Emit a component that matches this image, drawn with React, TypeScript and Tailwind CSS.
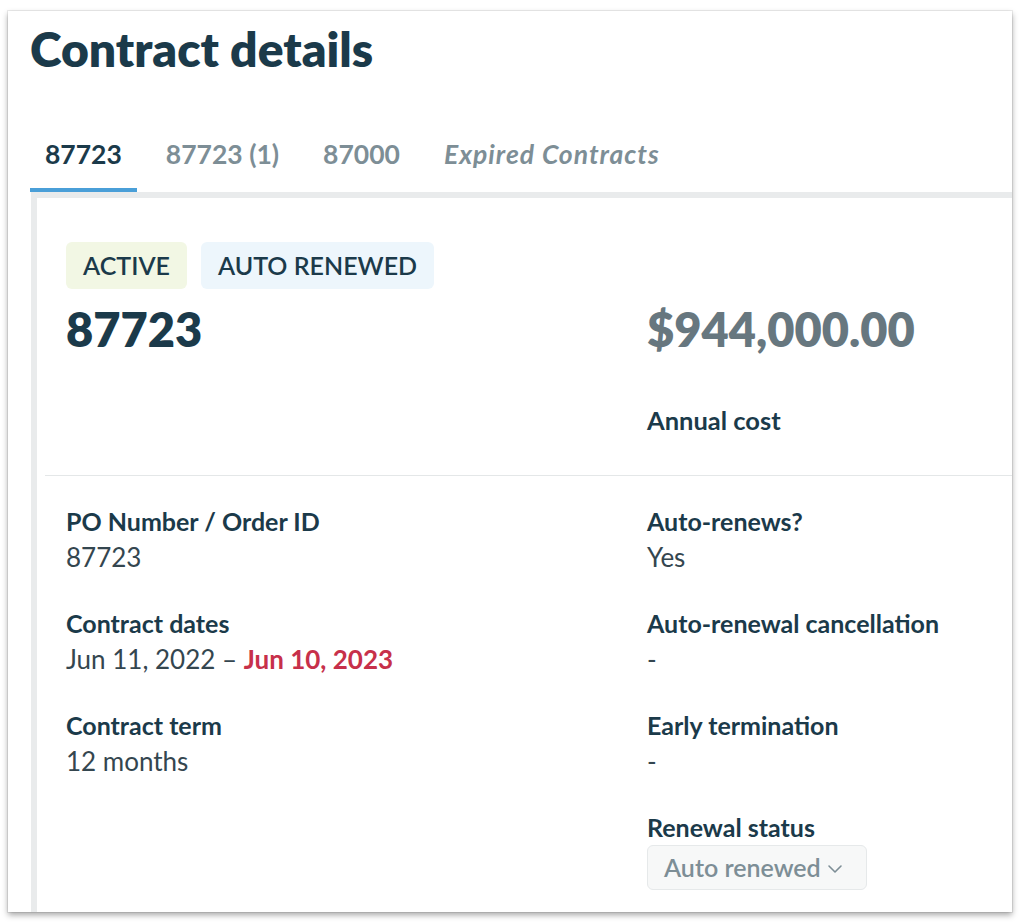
import { ChevronDown } from "lucide-react";

const LEFT_FIELDS = [
  { label: "PO Number / Order ID", value: "87723" },
  { label: "Contract dates", value: "dates" },
  { label: "Contract term", value: "12 months" },
];

const RIGHT_FIELDS = [
  { label: "Auto-renews?", value: "Yes" },
  { label: "Auto-renewal cancellation", value: "-" },
  { label: "Early termination", value: "-" },
];

const TABS = [
  { label: "87723", active: true },
  { label: "87723 (1)", active: false },
  { label: "87000", active: false },
  { label: "Expired Contracts", active: false, italic: true },
];

function Field({ label, children }: { label: string; children: React.ReactNode }) {
  return (
    <div className="mb-[30px]">
      <div className="text-[25px] leading-[36px] font-bold text-[#1b3a4a]">{label}</div>
      <div className="text-[26px] leading-[36px] text-[#34464f]">{children}</div>
    </div>
  );
}

export default function App() {
  return (
    <div className="min-h-screen bg-white pt-[11px] pl-[8px] font-['Lato',sans-serif]">
      <div className="w-[1004px] h-[901px] bg-white overflow-hidden flex flex-col pl-[22px] shadow-[0_3px_6px_rgba(0,0,0,0.35),0_0_0_1px_rgba(0,0,0,0.07)]">
        {/* Header */}
        <h1 className="pt-[14px] text-[48px] leading-[48px] font-extrabold text-[#1b3a4a]">
          Contract details
        </h1>

        {/* Tabs */}
        <div className="mt-[65px] flex gap-[14px]">
          {TABS.map((tab) => (
            <div
              key={tab.label}
              className={`px-[15px] pb-[18px] text-[26.5px] leading-[32px] font-bold border-b-4 ${
                tab.active ? "border-[#4a9fd8] text-[#1b3a4a]" : "border-transparent text-[#7d8e96]"
              } ${tab.italic ? "italic tracking-[1px]" : ""}`}
            >
              {tab.label}
            </div>
          ))}
        </div>

        {/* Panel */}
        <div className="flex-1 ml-[1px] border-l-[6px] border-t-[6px] border-[#e9ebec] bg-white">
          <div className="px-[29px] pt-[44px]">
            <div className="flex gap-[14px]">
              <span className="h-[47px] px-[17px] flex items-center rounded-[6px] bg-[#f2f7e4] text-[25px] font-semibold text-[#1b3a4a]">
                ACTIVE
              </span>
              <span className="h-[47px] px-[17px] flex items-center rounded-[6px] bg-[#edf6fc] text-[25px] font-semibold text-[#1b3a4a]">
                AUTO RENEWED
              </span>
            </div>
            <div className="grid grid-cols-[581px_1fr] mt-[12px] pb-[37px]">
              <div className="text-[47px] leading-[56px] font-extrabold text-[#1b3a4a]">87723</div>
              <div>
                <div className="text-[47px] leading-[56px] font-extrabold text-[#67777f]">$944,000.00</div>
                <div className="mt-[45px] text-[25.5px] leading-[36px] font-bold text-[#1b3a4a]">Annual cost</div>
              </div>
            </div>
          </div>

          <div className="ml-[8px] border-t border-[#e4e7e8]" />

          <div className="px-[29px] pt-[27px] grid grid-cols-[581px_1fr]">
            <div>
              {LEFT_FIELDS.map((f) => (
                <Field key={f.label} label={f.label}>
                  {f.value === "dates" ? (
                    <>
                      Jun 11, 2022 – <span className="font-bold text-[#c7304a]">Jun 10, 2023</span>
                    </>
                  ) : (
                    f.value
                  )}
                </Field>
              ))}
            </div>
            <div>
              {RIGHT_FIELDS.map((f) => (
                <Field key={f.label} label={f.label}>
                  {f.value}
                </Field>
              ))}
              <div className="text-[25px] leading-[36px] font-bold text-[#1b3a4a]">Renewal status</div>
              <div className="inline-flex items-center h-[45px] pl-[16px] pr-[19px] gap-[2px] rounded-[6px] border border-[#e6e9ea] bg-[#f7f8f8] text-[25px] font-semibold text-[#7d8e96]">
                Auto renewed
                <ChevronDown size={24} strokeWidth={1.6} className="mt-[2px]" />
              </div>
            </div>
          </div>
        </div>
      </div>
    </div>
  );
}
